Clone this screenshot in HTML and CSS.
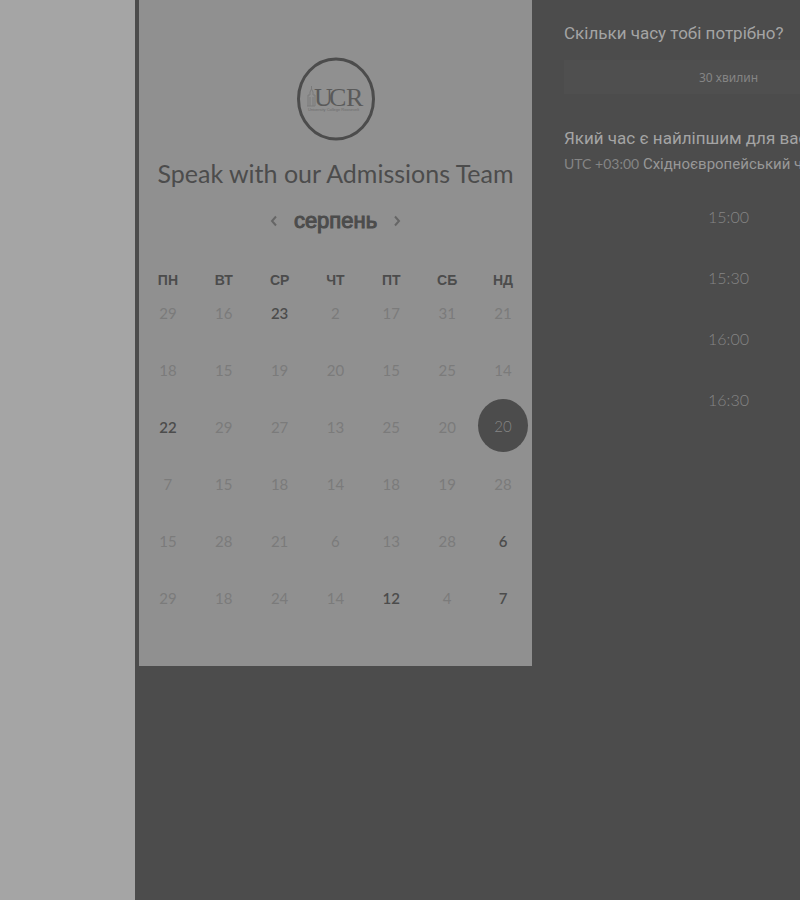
FILE: index.html
```html
<!DOCTYPE html>
<html lang="uk">
<head>
<meta charset="utf-8">
<meta name="viewport" content="width=device-width, initial-scale=1">
<title>Speak with our Admissions Team</title>
<link rel="stylesheet" href="styles.css">
</head>
<body>
<main class="scheduler">
  <section class="calendar">
    <svg class="logo" viewBox="0 0 80 84" role="img" aria-label="UCR">
      <ellipse cx="40" cy="42" rx="37.5" ry="40" fill="none" stroke="#4c4c4c" stroke-width="3"/>
      <path d="M12 49V38h2v-3l1.500-3 1.500 3v3h2v11M14 40v9M17 40v9M11 49h8M15.500 32v-3" fill="none" stroke="#7a7a7a" stroke-width="1"/>
      <text class="logo-name" y="49"><tspan x="18">U</tspan><tspan x="33">C</tspan><tspan x="50">R</tspan></text>
      <text class="logo-tag" x="12" y="54">University College Roosevelt</text>
    </svg>
    <h1 class="title">Speak with our Admissions Team</h1>
    <div class="month">
      <button class="arrow" type="button" aria-label="Попередній місяць"><svg viewBox="0 0 8 12"><path d="M6 1.500 2 6l4 4.500"/></svg></button>
      <h2 class="month-name">серпень</h2>
      <button class="arrow" type="button" aria-label="Наступний місяць"><svg viewBox="0 0 8 12"><path d="m2 1.500 4 4.500-4 4.500"/></svg></button>
    </div>
    <table class="days">
      <thead><tr><th>ПН</th><th>ВТ</th><th>СР</th><th>ЧТ</th><th>ПТ</th><th>СБ</th><th>НД</th></tr></thead>
      <tbody>
        <tr><td><button disabled>29</button></td><td><button disabled>16</button></td><td><button>23</button></td><td><button disabled>2</button></td><td><button disabled>17</button></td><td><button disabled>31</button></td><td><button disabled>21</button></td></tr>
        <tr><td><button disabled>18</button></td><td><button disabled>15</button></td><td><button disabled>19</button></td><td><button disabled>20</button></td><td><button disabled>15</button></td><td><button disabled>25</button></td><td><button disabled>14</button></td></tr>
        <tr><td><button>22</button></td><td><button disabled>29</button></td><td><button disabled>27</button></td><td><button disabled>13</button></td><td><button disabled>25</button></td><td><button disabled>20</button></td><td><button class="selected" aria-pressed="true">20</button></td></tr>
        <tr><td><button disabled>7</button></td><td><button disabled>15</button></td><td><button disabled>18</button></td><td><button disabled>14</button></td><td><button disabled>18</button></td><td><button disabled>19</button></td><td><button disabled>28</button></td></tr>
        <tr><td><button disabled>15</button></td><td><button disabled>28</button></td><td><button disabled>21</button></td><td><button disabled>6</button></td><td><button disabled>13</button></td><td><button disabled>28</button></td><td><button>6</button></td></tr>
        <tr><td><button disabled>29</button></td><td><button disabled>18</button></td><td><button disabled>24</button></td><td><button disabled>14</button></td><td><button>12</button></td><td><button disabled>4</button></td><td><button>7</button></td></tr>
      </tbody>
    </table>
  </section>
  <section class="booking">
    <h2 class="question">Скільки часу тобі потрібно?</h2>
    <button class="duration" type="button">30 хвилин</button>
    <h2 class="question">Який час є найліпшим для вас?</h2>
    <p class="zone"><span class="offset">UTC +03:00</span> Східноєвропейський час</p>
    <div class="times">
      <button type="button">15:00</button>
      <button type="button">15:30</button>
      <button type="button">16:00</button>
      <button type="button">16:30</button>
    </div>
  </section>
</main>
</body>
</html>
```
FILE: styles.css
```css
* { box-sizing: border-box; }

body {
  margin: 0;
  background: #a5a5a5;
  color: #4c4c4c;
  font-family: "Liberation Sans", sans-serif;
}

h1, h2, p { margin: 0; }

button {
  padding: 0;
  border: 0;
  background: none;
  color: inherit;
  font-family: Lato, sans-serif;
}

.scheduler {
  display: grid;
  grid-template-columns: 393px minmax(0, 1fr);
  align-items: start;
  min-height: 100vh;
  margin-left: 135px;
  padding-left: 4px;
  background: #4c4c4c;
  overflow: hidden;
}

.calendar {
  padding: 57px 1px 35px;
  background: #909090;
  text-align: center;
}

.logo {
  display: block;
  width: 80px;
  height: 84px;
  margin: 0 auto 14px;
}

.logo-name {
  fill: #5a5a5a;
  font: 26px "Liberation Serif", serif;
}

.logo-tag {
  fill: #6c6c6c;
  font: 4px "Liberation Sans", sans-serif;
}

.title {
  font: 400 25px/36px Lato, sans-serif;
  white-space: nowrap;
}

.month {
  display: flex;
  justify-content: center;
  align-items: center;
  gap: 16px;
  height: 60px;
}

.month-name {
  font-size: 22px;
  font-weight: 400;
  line-height: 28px;
  -webkit-text-stroke: 1px #4c4c4c;
}

.arrow svg {
  display: block;
  width: 8px;
  height: 12px;
  fill: none;
  stroke: #666;
  stroke-width: 2;
}

.days {
  width: 100%;
  margin-top: 20px;
  table-layout: fixed;
  border-collapse: collapse;
}

.days th {
  padding: 0;
  font-size: 14px;
  line-height: 18px;
}

.days td {
  height: 57px;
  padding: 0;
  vertical-align: top;
}

.days button {
  display: block;
  width: 50px;
  height: 48px;
  margin: 0 auto;
  font-size: 15px;
  font-weight: 600;
}

.days button:disabled {
  color: #7b7b7b;
  font-weight: 400;
}

.days .selected {
  height: 53px;
  margin: -4px auto 0;
  border-radius: 50%;
  background: #4c4c4c;
  color: #858585;
  font-weight: 300;
}

.booking {
  min-width: 393px;
  padding: 22px 32px;
  color: #a4a4a4;
  white-space: nowrap;
}

.question {
  font: 400 17px/22px Roboto, sans-serif;
}

.duration {
  display: block;
  width: 100%;
  height: 34px;
  margin: 16px 0 33px;
  background: #4f4f4f;
  color: #858585;
  font: 12px "Noto Sans", sans-serif;
}

.zone {
  margin-top: 5px;
  font: 400 15px/20px Roboto, sans-serif;
  color: #989898;
}

.offset {
  color: #858585;
  font-family: Lato, sans-serif;
  font-size: 14px;
}

.times {
  display: grid;
  gap: 15px;
  margin-top: 19px;
}

.times button {
  height: 46px;
  color: #858585;
  font-size: 16px;
  font-weight: 300;
}
```
